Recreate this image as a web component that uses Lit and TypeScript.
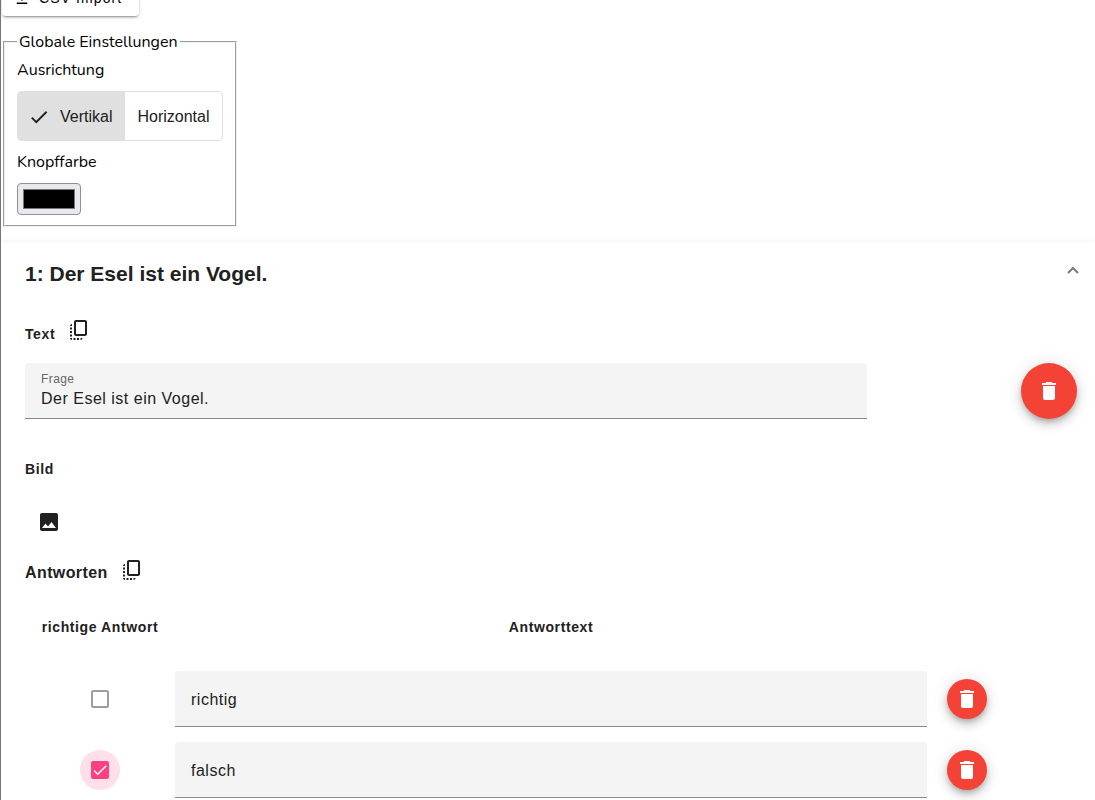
import { LitElement, html, css, svg } from "lit";
import { customElement, state } from "lit/decorators.js";

const icon = (d: string, size = 24) => html`<svg class="icon" width=${size} height=${size} viewBox="0 0 24 24" aria-hidden="true">${svg`<path d=${d} fill="currentColor"></path>`}</svg>`;

const DOWNLOAD = "M5 20h14v-2H5v2zM19 9h-4V3H9v6H5l7 7z";
const CHECK = "M9 16.17L4.83 12l-1.42 1.41L9 19 21 7l-1.41-1.41z";
const DELETE = "M6 19c0 1.1.9 2 2 2h8c1.1 0 2-.9 2-2V7H6v12zM19 4h-3.5l-1-1h-5l-1 1H5v2h14V4z";
const IMAGE = "M21 19V5c0-1.1-.9-2-2-2H5c-1.1 0-2 .9-2 2v14c0 1.1.9 2 2 2h14c1.1 0 2-.9 2-2zM8.5 13.5l2.5 3.01L14.5 12l4.5 6H5l3.5-4.5z";
const COPY_ALL = "M18 2H9c-1.1 0-2 .9-2 2v12c0 1.1.9 2 2 2h9c1.1 0 2-.9 2-2V4c0-1.1-.9-2-2-2zm0 14H9V4h9v12zM3 15v-2h2v2H3zm0-5.5h2v2H3v-2zM10 20h2v2h-2v-2zm-7-1.5v-2h2v2H3zM5 22c-1.1 0-2-.9-2-2h2v2zm3.5 0h-2v-2h2v2zm5 0v-2h2c0 1.1-.9 2-2 2zM5 6v2H3c0-1.1.9-2 2-2z";

interface Answer {
  text: string;
  correct: boolean;
  focused: boolean;
}

@customElement("app-root")
export class AppRoot extends LitElement {
  @state() private orientation = "Vertikal";
  @state() private question = "Der Esel ist ein Vogel.";
  @state() private answers: Answer[] = [
    { text: "richtig", correct: false, focused: false },
    { text: "falsch", correct: true, focused: true },
  ];

  static styles = css`
    :host {
      display: block;
      box-sizing: border-box;
      height: 100vh;
      overflow: hidden;
      border-left: 1px solid #777;
      background: #fff;
      color: #212121;
      font: 16px/24px "Liberation Sans", Arial, sans-serif;
    }
    * { box-sizing: border-box; }
    button { font: inherit; color: inherit; border: 0; padding: 0; background: none; cursor: pointer; }
    h2, h3 { margin: 0; }
    .icon { display: block; flex: none; }

    .toolbar { display: flex; margin-top: -20px; padding-left: 1px; }
    .raised {
      display: flex;
      align-items: center;
      gap: 8px;
      height: 36px;
      padding: 0 17px 0 11px;
      border-radius: 4px;
      background: #fff;
      color: #000;
      font-size: 14px;
      letter-spacing: 1.1px;
      box-shadow: 0 3px 1px -2px rgba(0, 0, 0, .2), 0 2px 2px rgba(0, 0, 0, .14), 0 1px 5px rgba(0, 0, 0, .12);
    }

    .settings {
      width: fit-content;
      margin: 15px 2px;
      padding: 6px 12px 10px;
      border: 2px groove #f0f0f0;
      color: #000;
      font-family: Nunito, Lato, sans-serif;
    }
    .settings legend { padding: 0 2px; line-height: 22px; }
    .settings .caption { display: block; line-height: 22px; }
    .toggle {
      display: flex;
      width: fit-content;
      margin: 10px 0;
      border: 1px solid #e0e0e0;
      border-radius: 4px;
      overflow: hidden;
      color: #212121;
      font-family: "Liberation Sans", Arial, sans-serif;
    }
    .toggle button { display: flex; align-items: center; gap: 10px; height: 48px; padding: 2px 12px 0; }
    .toggle button + button { border-left: 1px solid #e0e0e0; }
    .toggle .on { background: #e0e0e0; padding-left: 10px; }
    .color {
      display: block;
      width: 64px;
      height: 32px;
      margin-top: 10px;
      padding: 5px;
      border: 1px solid #8f8f9d;
      border-radius: 4px;
      background: #e9e9ed;
      appearance: none;
    }
    .color::-webkit-color-swatch-wrapper { padding: 0; }
    .color::-webkit-color-swatch { border: 1px solid #777; border-radius: 0; }

    .panel { box-shadow: 0 3px 1px -2px rgba(0, 0, 0, .2), 0 2px 2px rgba(0, 0, 0, .14), 0 1px 5px rgba(0, 0, 0, .12); }
    .head {
      display: flex;
      align-items: center;
      justify-content: space-between;
      width: 100%;
      height: 64px;
      padding: 0 16px 0 24px;
      font-size: 21px;
      font-weight: 700;
      text-align: left;
    }
    .chevron { display: block; margin-bottom: 8px; }
    .body { padding: 7px 18px 16px 24px; }
    .title { display: flex; align-items: center; gap: 12px; height: 34px; }
    .small { font-size: 14px; letter-spacing: .6px; }
    .medium { font-size: 16px; letter-spacing: .4px; }
    .title .small { padding-top: 8px; }
    .title .medium { padding-top: 6px; }

    .row { display: flex; align-items: center; justify-content: space-between; margin-top: 16px; }
    .field {
      display: flex;
      flex-direction: column;
      justify-content: center;
      height: 56px;
      padding: 0 16px;
      border-bottom: 1px solid #8a8a8a;
      border-radius: 4px 4px 0 0;
      background: #f4f4f4;
    }
    .row .field { width: 80%; }
    .answers .field { padding-top: 4px; }
    .field label { color: #666; font-size: 12px; line-height: 16px; letter-spacing: .4px; }
    .field input {
      width: 100%;
      height: 24px;
      padding: 0;
      border: 0;
      outline: 0;
      background: none;
      color: #212121;
      font: inherit;
      letter-spacing: .5px;
    }
    .fab {
      display: grid;
      place-items: center;
      width: 56px;
      height: 56px;
      border-radius: 50%;
      background: #f44336;
      color: #fff;
      box-shadow: 0 3px 5px -1px rgba(0, 0, 0, .2), 0 6px 10px rgba(0, 0, 0, .14), 0 1px 18px rgba(0, 0, 0, .12);
    }
    .fab.mini { width: 40px; height: 40px; }
    .picture { margin-top: 38px; line-height: 24px; }
    .image-button { display: grid; place-items: center; width: 48px; height: 48px; margin: 17px 0 7px; }

    .answers { width: calc(100% - 90px); margin-top: 3px; border-collapse: collapse; table-layout: fixed; }
    .answers th { height: 73px; padding: 0; text-align: center; }
    .answers td { height: 71px; padding: 0; vertical-align: middle; }
    .answers .check-col { width: 150px; }
    .answers .delete-col { width: 60px; }
    .answers .delete { padding-left: 20px; }
    .tick { display: grid; place-items: center; width: 40px; height: 40px; margin: 0 auto; border-radius: 50%; }
    .tick.focused { background: #ffe0ea; }
    .tick > * { grid-area: 1 / 1; }
    .tick input {
      width: 18px;
      height: 18px;
      margin: 0;
      border: 2px solid #9e9e9e;
      border-radius: 2px;
      background: #fff;
      appearance: none;
    }
    .tick input:checked { border-color: #ff4081; background: #ff4081; }
    .tick svg { color: #fff; pointer-events: none; }
  `;

  private setCorrect(index: number, event: Event) {
    const correct = (event.target as HTMLInputElement).checked;
    this.answers = this.answers.map((a, i) => (i === index ? { ...a, correct } : a));
  }

  private removeAnswer(index: number) {
    this.answers = this.answers.filter((_, i) => i !== index);
  }

  private renderAnswer(answer: Answer, index: number) {
    return html`<tr>
      <td>
        <div class="tick ${answer.focused ? "focused" : ""}">
          <input type="checkbox" aria-label="richtige Antwort" .checked=${answer.correct} @change=${(e: Event) => this.setCorrect(index, e)} />
          ${answer.correct ? icon(CHECK, 18) : ""}
        </div>
      </td>
      <td><div class="field"><input aria-label="Antworttext" .value=${answer.text} /></div></td>
      <td class="delete"><button class="fab mini" aria-label="Antwort löschen" @click=${() => this.removeAnswer(index)}>${icon(DELETE)}</button></td>
    </tr>`;
  }

  render() {
    return html`
      <div class="toolbar"><button class="raised">${icon(DOWNLOAD, 18)}CSV Import</button></div>
      <fieldset class="settings">
        <legend>Globale Einstellungen</legend>
        <span class="caption">Ausrichtung</span>
        <div class="toggle" role="group" aria-label="Ausrichtung">
          ${["Vertikal", "Horizontal"].map((name) => {
            const on = this.orientation === name;
            return html`<button class=${on ? "on" : ""} aria-pressed=${on} @click=${() => (this.orientation = name)}>${on ? icon(CHECK, 22) : ""}${name}</button>`;
          })}
        </div>
        <label class="caption" for="color">Knopffarbe</label>
        <input class="color" id="color" type="color" value="#000000" />
      </fieldset>
      <section class="panel">
        <button class="head" aria-expanded="true">
          1: ${this.question}
          <svg class="chevron" width="12" height="8" viewBox="0 0 12 8" aria-hidden="true"><path d="M1 7l5-5 5 5" fill="none" stroke="#7a7a7a" stroke-width="2"></path></svg>
        </button>
        <div class="body">
          <div class="title"><h3 class="small">Text</h3><button aria-label="Text kopieren">${icon(COPY_ALL)}</button></div>
          <div class="row">
            <div class="field">
              <label for="question">Frage</label>
              <input id="question" .value=${this.question} @input=${(e: Event) => (this.question = (e.target as HTMLInputElement).value)} />
            </div>
            <button class="fab" aria-label="Frage löschen">${icon(DELETE)}</button>
          </div>
          <h3 class="small picture">Bild</h3>
          <button class="image-button" aria-label="Bild auswählen">${icon(IMAGE)}</button>
          <div class="title"><h2 class="medium">Antworten</h2><button aria-label="Antworten kopieren">${icon(COPY_ALL)}</button></div>
          <table class="answers">
            <colgroup><col class="check-col" /><col /><col class="delete-col" /></colgroup>
            <thead><tr><th class="small">richtige Antwort</th><th class="small">Antworttext</th><th></th></tr></thead>
            <tbody>${this.answers.map((a, i) => this.renderAnswer(a, i))}</tbody>
          </table>
        </div>
      </section>
    `;
  }
}
